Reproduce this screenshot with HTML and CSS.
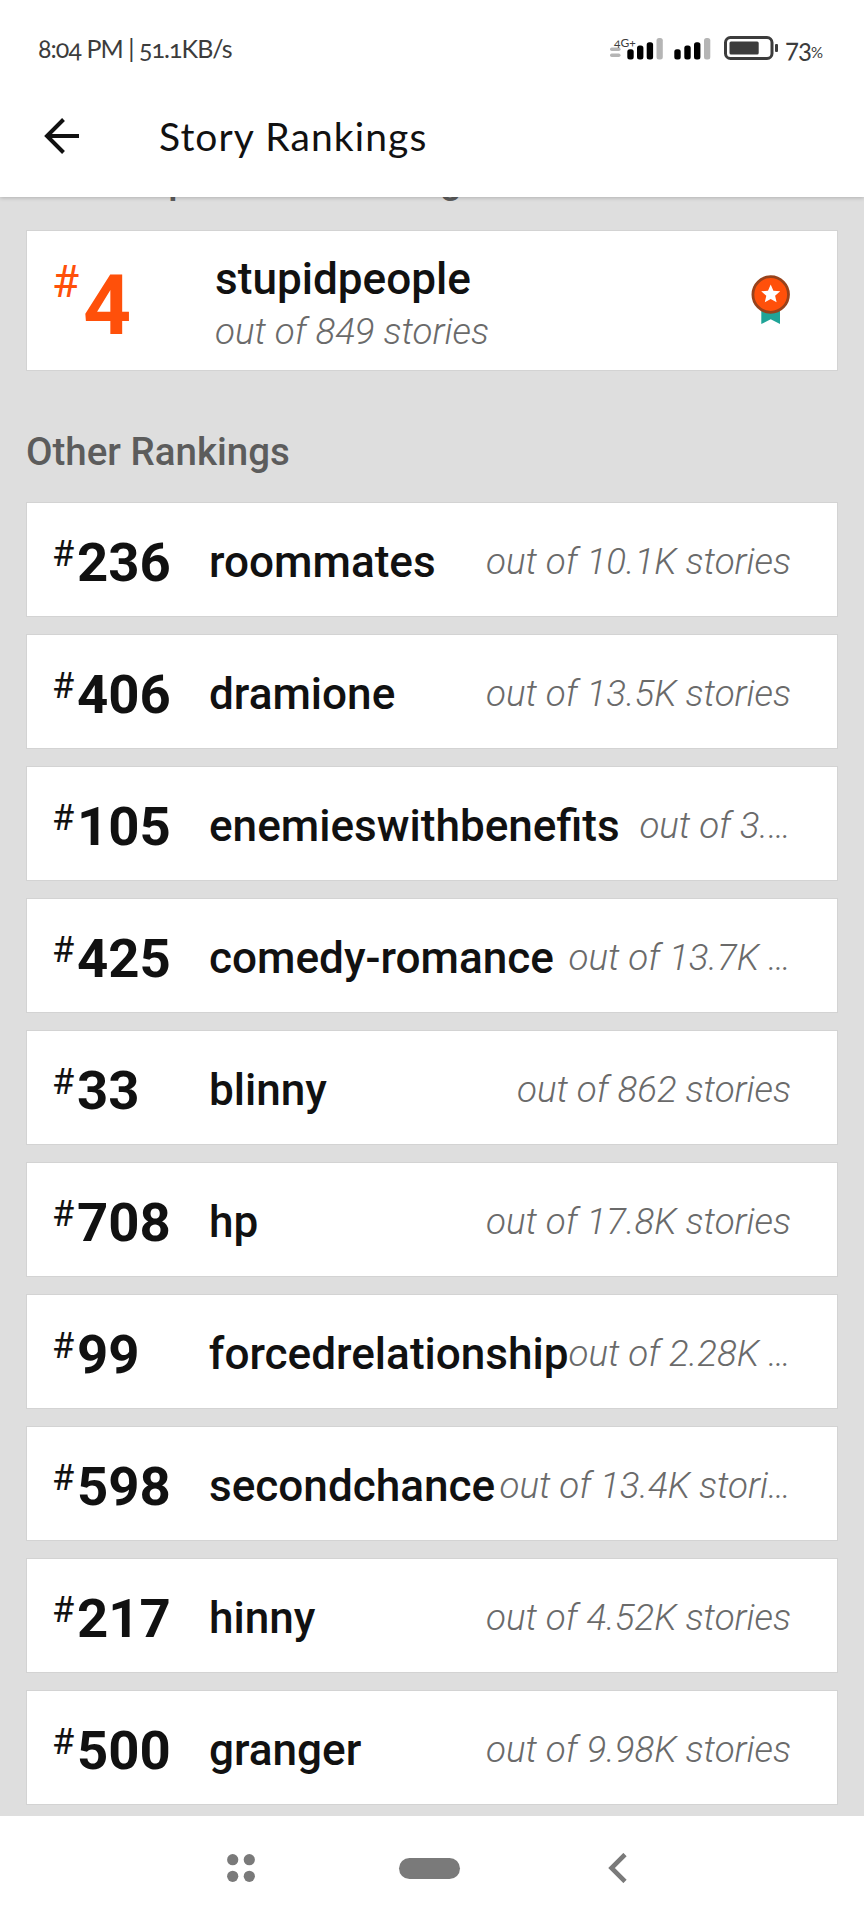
FILE: index.html
```html
<!DOCTYPE html>
<html lang="en">
  <head>
    <meta charset="UTF-8" />
    <meta name="viewport" content="width=device-width, initial-scale=1.0" />
    <title>Story Rankings</title>
    <link rel="stylesheet" href="styles.css">
  </head>
  <body>
    <header class="topbar">
      <div class="status">
        <span class="time">8:04 PM | 51.1KB/s</span>
        <svg class="signals" width="170" height="32" viewBox="608 32 170 32">
          <g fill="#b5b5b5">
            <rect x="610" y="47.500" width="10.500" height="3.500" rx="1.700" />
            <rect x="610" y="53.500" width="10.500" height="3.500" rx="1.700" />
            <rect x="656.500" y="38" width="6.300" height="21.500" rx="2.500" />
            <rect x="704" y="38" width="6.300" height="21.500" rx="2.500" />
          </g>
          <g fill="#000">
            <rect x="627.300" y="49.300" width="6.400" height="10.200" rx="2.500" />
            <rect x="637" y="45.600" width="6.400" height="13.900" rx="2.500" />
            <rect x="646.700" y="42.300" width="6.400" height="17.200" rx="2.500" />
            <rect x="674.300" y="49.300" width="6.400" height="10.200" rx="2.500" />
            <rect x="684.300" y="45.600" width="6.400" height="13.900" rx="2.500" />
            <rect x="694" y="42.300" width="6.400" height="17.200" rx="2.500" />
          </g>
          <text class="net" x="614" y="47">4G+</text>
          <rect x="725.500" y="37.500" width="46.500" height="21" rx="5" fill="none" stroke="#3c3c3c" stroke-width="3" />
          <rect x="729.500" y="41.500" width="29.200" height="13" rx="1.500" fill="#3c3c3c" />
          <rect x="775" y="44" width="3" height="8" rx="1" fill="#3c3c3c" />
        </svg>
        <span class="battery">73<small>%</small></span>
      </div>
      <div class="appbar">
        <svg class="back" width="36" height="36" viewBox="0 0 36 36" fill="none" stroke="#111" stroke-width="4">
          <path d="M35 18H3M19.500 1.500L3 18l16.500 16.500" />
        </svg>
        <h1 class="title">Story Rankings</h1>
      </div>
    </header>

    <main class="content">
      <h2 class="heading first">Most Impressive Ranking</h2>
      <div class="card best">
        <span class="hash">#</span>
        <span class="number">4</span>
        <div class="info">
          <div class="tag">stupidpeople</div>
          <div class="total">out of 849 stories</div>
        </div>
        <svg class="medal" width="40" height="50" viewBox="0 0 40 50">
          <path d="M10.300 30H29v18l-9.300-4.700-9.400 4.700z" fill="#1fa497" />
          <circle cx="19.700" cy="18.500" r="17.800" fill="#ff500a" stroke="#97421b" stroke-width="2.800" />
          <path d="M19.700 8.500l2.700 6.200 6.800.6-5.100 4.500 1.500 6.500-5.900-3.400-5.900 3.400 1.500-6.500-5.100-4.500 6.800-.6z" fill="#fff" />
        </svg>
      </div>

      <h2 class="heading">Other Rankings</h2>
      <div class="list">
        <div class="card"><span class="hash">#</span><span class="number">236</span><span class="tag">roommates</span><span class="total">out of 10.1K stories</span></div>
        <div class="card"><span class="hash">#</span><span class="number">406</span><span class="tag">dramione</span><span class="total">out of 13.5K stories</span></div>
        <div class="card"><span class="hash">#</span><span class="number">105</span><span class="tag">enemieswithbenefits</span><span class="total">out of 3.…</span></div>
        <div class="card"><span class="hash">#</span><span class="number">425</span><span class="tag">comedy-romance</span><span class="total">out of 13.7K …</span></div>
        <div class="card"><span class="hash">#</span><span class="number">33</span><span class="tag">blinny</span><span class="total">out of 862 stories</span></div>
        <div class="card"><span class="hash">#</span><span class="number">708</span><span class="tag">hp</span><span class="total">out of 17.8K stories</span></div>
        <div class="card"><span class="hash">#</span><span class="number">99</span><span class="tag">forcedrelationship</span><span class="total">out of 2.28K …</span></div>
        <div class="card"><span class="hash">#</span><span class="number">598</span><span class="tag">secondchance</span><span class="total">out of 13.4K stori…</span></div>
        <div class="card"><span class="hash">#</span><span class="number">217</span><span class="tag">hinny</span><span class="total">out of 4.52K stories</span></div>
        <div class="card"><span class="hash">#</span><span class="number">500</span><span class="tag">granger</span><span class="total">out of 9.98K stories</span></div>
      </div>
    </main>

    <nav class="navbar">
      <svg width="28" height="28" viewBox="0 0 28 28" fill="#7a7a7a">
        <circle cx="5.700" cy="5.700" r="5.600" />
        <circle cx="22.300" cy="5.700" r="5.600" />
        <circle cx="5.700" cy="22.300" r="5.600" />
        <circle cx="22.300" cy="22.300" r="5.600" />
      </svg>
      <span class="home"></span>
      <svg width="19" height="30" viewBox="0 0 19 30" fill="none" stroke="#7a7a7a" stroke-width="4.600">
        <path d="M17 1.500L3.500 15 17 28.500" />
      </svg>
    </nav>
  </body>
</html>
```

FILE: styles.css
```css
* {
  box-sizing: border-box;
}
body {
  margin: 0;
  height: 1920px;
  display: flex;
  flex-direction: column;
  overflow: hidden;
  background-color: #dedede;
  color: #111;
  font-family: Roboto, sans-serif;
}
.topbar {
  position: relative;
  z-index: 1;
  flex: none;
  height: 197px;
  background-color: #fff;
  box-shadow: 0 1px 4px rgba(0, 0, 0, 0.2);
  font-family: Lato, sans-serif;
  font-variant-numeric: oldstyle-nums;
}
.status {
  display: flex;
  align-items: center;
  height: 96px;
  padding-left: 38px;
  color: #3c3c3c;
  font-size: 25px;
  white-space: nowrap;
}
.time {
  width: 570px;
  letter-spacing: -0.95px;
}
.signals {
  flex: none;
}
.net {
  font-size: 12px;
  fill: #3c3c3c;
}
.battery {
  margin-left: 7px;
  font-size: 26px;
  letter-spacing: -1px;
}
.battery small {
  font-size: 15px;
}
.appbar {
  display: flex;
  align-items: center;
  height: 80px;
  padding-left: 44px;
}
.title {
  margin: 0 0 0 79px;
  font-size: 39px;
  font-weight: 400;
  letter-spacing: 1.1px;
}
.content {
  flex: none;
  height: 1619px;
  padding: 1px 27px 0;
  overflow: hidden;
}
.heading {
  margin: 59px 0 28px -1px;
  font-size: 38.5px;
  line-height: 46px;
  font-weight: 500;
  color: #5c5c5c;
}
.heading.first {
  margin-top: -41px;
}
.list {
  display: flex;
  flex-direction: column;
  gap: 19px;
}
.card {
  display: flex;
  align-items: center;
  height: 113px;
  padding: 0 46px 0 25px;
  background-color: #fff;
  box-shadow: 0 0 0 1px #d3d3d3;
  white-space: nowrap;
}
.hash {
  width: 25px;
  padding-bottom: 12px;
  font-size: 36px;
}
.number {
  width: 132px;
  padding-top: 5px;
  font-size: 54.5px;
  font-weight: 700;
}
.tag {
  padding-top: 4px;
  font-size: 44.1px;
  font-weight: 500;
}
.total {
  margin-left: auto;
  padding-top: 4px;
  font-size: 36.7px;
  font-style: italic;
  font-weight: 300;
  color: #6a6a6a;
}
.best {
  height: 139px;
}
.best .hash {
  width: 31px;
  padding-bottom: 37px;
  font-size: 44px;
  color: #ff500a;
}
.best .number {
  width: 132px;
  padding-top: 9px;
  font-size: 84px;
  color: #ff500a;
}
.best .info {
  padding-top: 9px;
}
.best .tag {
  padding: 0;
  line-height: 52px;
}
.best .total {
  padding: 0;
  line-height: 53px;
}
.medal {
  margin-left: auto;
  overflow: visible;
}
.navbar {
  display: flex;
  align-items: center;
  flex: none;
  height: 104px;
  padding-left: 227px;
  background-color: #fff;
}
.home {
  width: 61px;
  height: 21px;
  margin: 0 148px 0 144px;
  border-radius: 11px;
  background-color: #7a7a7a;
}
```
